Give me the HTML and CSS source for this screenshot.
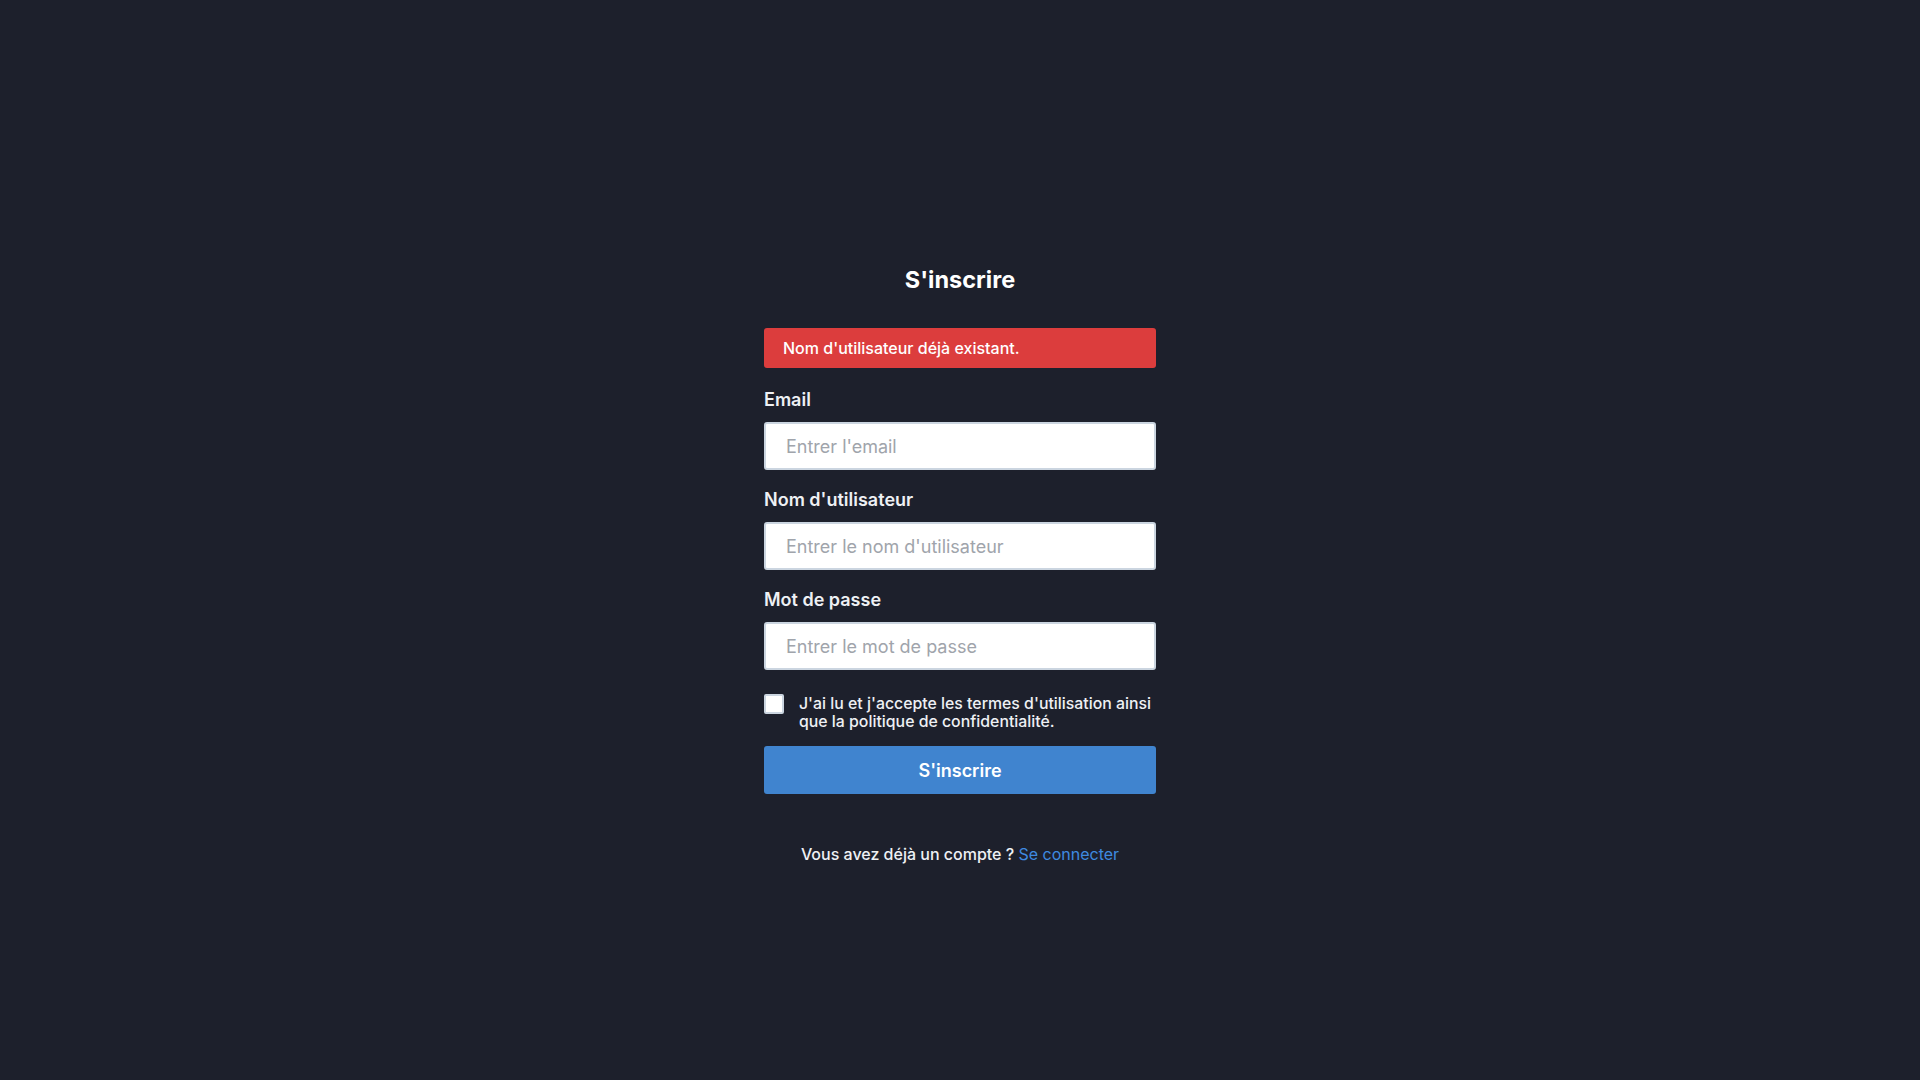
FILE: index.html
```html
<!DOCTYPE html>
<html lang="fr">
<head>
<meta charset="utf-8">
<title>S'inscrire</title>
<link rel="stylesheet" href="styles.css">
</head>
<body>
<main class="page">
  <form class="form">
    <h1 class="title">S'inscrire</h1>
    <div class="alert">Nom d'utilisateur déjà existant.</div>
    <div class="field">
      <label class="label" for="email">Email</label>
      <input class="input" id="email" type="email" placeholder="Entrer l'email">
    </div>
    <div class="field">
      <label class="label" for="user">Nom d'utilisateur</label>
      <input class="input" id="user" type="text" placeholder="Entrer le nom d'utilisateur">
    </div>
    <div class="field">
      <label class="label" for="pass">Mot de passe</label>
      <input class="input" id="pass" type="password" placeholder="Entrer le mot de passe">
    </div>
    <label class="terms">
      <span class="box"></span>
      <span class="terms-text">J'ai lu et j'accepte les termes d'utilisation ainsi que la politique de confidentialité.</span>
    </label>
    <button class="submit" type="button">S'inscrire</button>
    <p class="login">Vous avez déjà un compte ? <a class="link" href="#">Se connecter</a></p>
  </form>
</main>
</body>
</html>
```
FILE: styles.css
```css
* { box-sizing: border-box; }
html, body { margin: 0; height: 100%; }
body {
  background: #1d202c;
  font-family: Inter, "Noto Sans", sans-serif;
  color: #ffffff;
}
.page {
  display: flex;
  justify-content: center;
  padding-top: 264px;
}
.form {
  width: 392px;
  display: flex;
  flex-direction: column;
}
.title {
  margin: 0;
  font-size: 23.5px;
  line-height: 32px;
  font-weight: 700;
  text-align: center;
}
.alert {
  margin-top: 32px;
  margin-bottom: 2px;
  height: 40px;
  padding: 0 19px;
  display: flex;
  align-items: center;
  background: #dc3d3d;
  border-radius: 3px;
  font-size: 16px;
  font-weight: 500;
}
.field {
  display: flex;
  flex-direction: column;
  margin-top: 18px;
}
.label {
  font-size: 18px;
  line-height: 24px;
  font-weight: 600;
  color: #eef0f4;
  margin-bottom: 10px;
}
.input {
  height: 48px;
  border: 2px solid #cbd5e0;
  border-radius: 3px;
  background: #ffffff;
  padding: 0 20px;
  font-family: inherit;
  font-size: 18px;
  color: #1d202c;
  outline: none;
}
.input::placeholder { color: #a0a4ab; }
.terms {
  display: flex;
  align-items: flex-start;
  gap: 15px;
  margin-top: 24px;
}
.box {
  flex: none;
  width: 20px;
  height: 20px;
  background: #ffffff;
  border: 2px solid #cbd5e0;
  border-radius: 2px;
}
.terms-text {
  padding-top: 1px;
  font-size: 15.85px;
  line-height: 18px;
  font-weight: 500;
  color: #eef0f4;
}
.submit {
  margin-top: 15px;
  height: 48px;
  border: none;
  border-radius: 3px;
  background: #4084cf;
  color: #ffffff;
  font-family: inherit;
  font-size: 18px;
  font-weight: 600;
}
.login {
  margin: 50px 0 0;
  text-align: center;
  font-size: 16px;
  line-height: 20px;
  font-weight: 500;
  color: #eef0f4;
}
.link {
  color: #3f8ae0;
  text-decoration: none;
  font-weight: 400;
}
```
